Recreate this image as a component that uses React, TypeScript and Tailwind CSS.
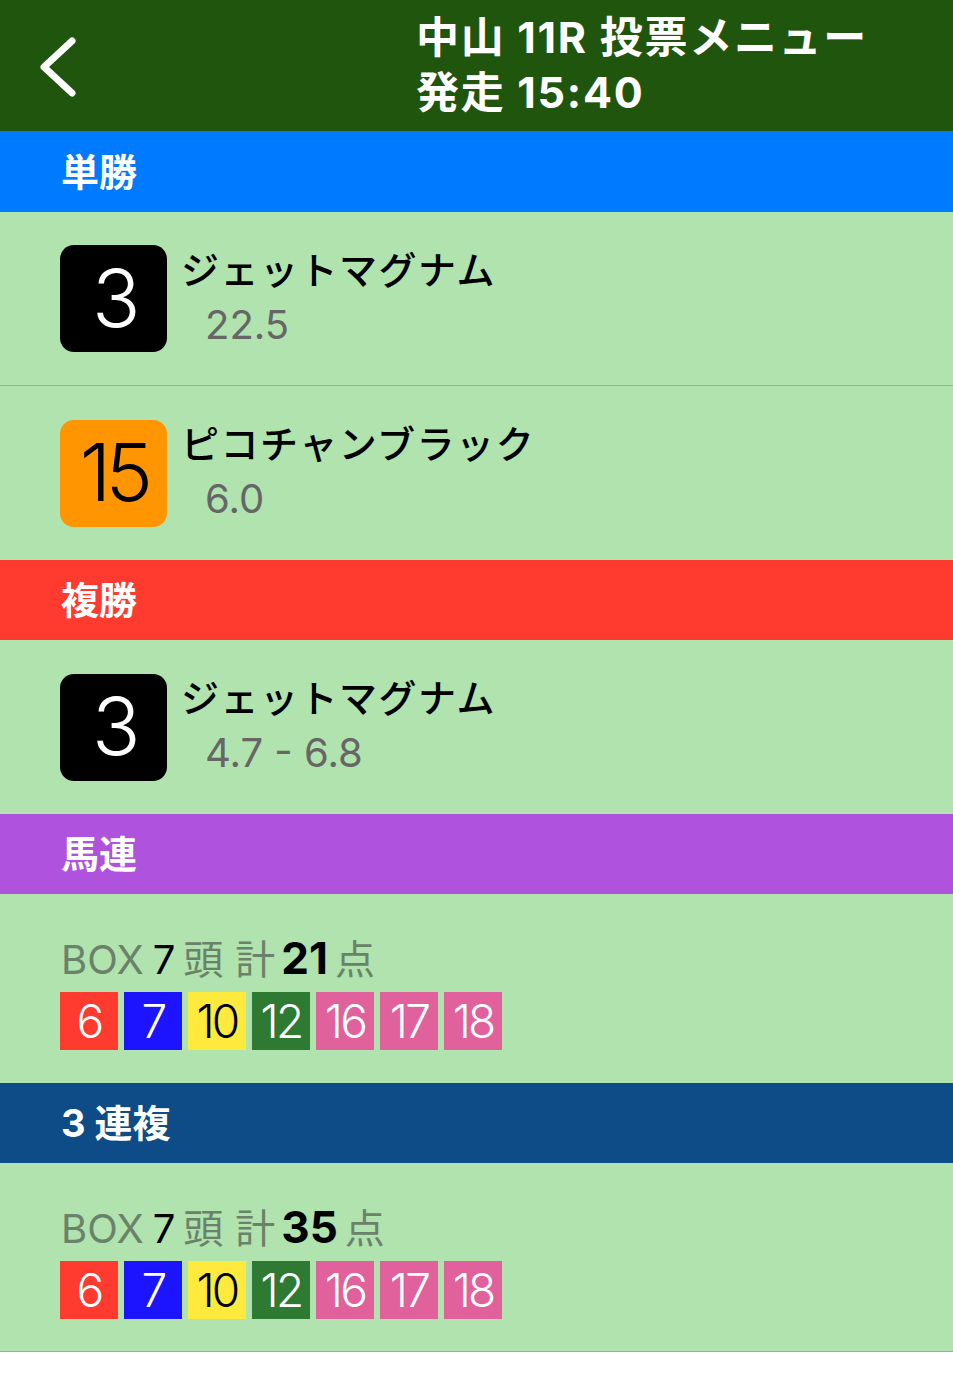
import React from 'react';

const FONT = "font-['Inter','Noto_Sans_CJK_JP',sans-serif]";

type Pick = { num: string; name: string; odds: string; badge: string };

const boxColors: Record<string, string> = {
  '6': 'bg-[#ff3b30] text-white',
  '7': 'bg-[#1c14ff] text-white',
  '10': 'bg-[#fdea3c] text-black',
  '12': 'bg-[#2e7a32] text-white',
  '16': 'bg-[#e0619c] text-white',
  '17': 'bg-[#e0619c] text-white',
  '18': 'bg-[#e0619c] text-white',
};

const SectionHeader: React.FC<{ label: string; color: string; h?: string }> = ({ label, color, h = 'h-[80px]' }) => (
  <div className={`${color} ${h} flex items-center pl-[61px]`}>
    <span className="text-[38px] font-bold text-white leading-none whitespace-pre">{label}</span>
  </div>
);

const PickRow: React.FC<{ pick: Pick; border?: boolean }> = ({ pick, border }) => (
  <div className={`h-[174px] flex items-center pl-[60px] bg-[#b0e3ae] ${border ? 'border-b border-[#8cb98a]' : ''}`}>
    <div className={`w-[107px] h-[107px] rounded-[14px] flex items-center justify-center ${pick.badge}`}>
      <span className="text-[80px] font-light leading-none tracking-[-0.07em] pb-[2px]">{pick.num}</span>
    </div>
    <div className="ml-[14px] flex flex-col pb-[2px]">
      <span className="text-[38px] font-medium text-black leading-[54px] tracking-[0.04em]">{pick.name}</span>
      <span className="text-[40px] text-[#666666] leading-[56px] pl-[24px] whitespace-pre">{pick.odds}</span>
    </div>
  </div>
);

const BoxRow: React.FC<{ total: string; h: string; border?: boolean }> = ({ total, h, border }) => (
  <div className={`${h} bg-[#b0e3ae] flex flex-col pl-[60px] pt-[39px] ${border ? 'border-b border-[#8cb98a]' : ''}`}>
    <div className="flex items-baseline text-[40px] leading-[50px] text-[#6b826a] pl-[1px]">
      <span>BOX</span>
      <span className="ml-[9px] text-black">7</span>
      <span className="ml-[8px]">頭</span>
      <span className="ml-[12px]">計</span>
      <span className="ml-[6px] text-black font-bold text-[44px]">{total}</span>
      <span className="ml-[7px]">点</span>
    </div>
    <div className="flex gap-[6px] mt-[7px]">
      {['6', '7', '10', '12', '16', '17', '18'].map((n) => (
        <div key={n} className={`w-[58px] h-[58px] flex items-center justify-center ${boxColors[n]}`}>
          <span className="text-[46px] font-light leading-none tracking-[-0.06em]">{n}</span>
        </div>
      ))}
    </div>
  </div>
);

export default function App() {
  return (
    <div className={`w-[953px] h-[1381px] bg-white ${FONT}`}>
      {/* Nav bar */}
      <div className="h-[131px] bg-[#20550e] flex items-center relative">
        <svg className="absolute left-[36px] top-[36px]" width="44" height="62" viewBox="0 0 44 62" fill="none">
          <polyline points="36,5 8,31 36,57" stroke="white" strokeWidth="7" strokeLinecap="round" strokeLinejoin="round" />
        </svg>
        <div className="pl-[416px] flex flex-col text-white font-bold text-[43px] leading-[55px] tracking-[0.04em] pb-[2px]">
          <span>中山 11R 投票メニュー</span>
          <span>発走 15:40</span>
        </div>
      </div>

      <SectionHeader label="単勝" color="bg-[#007aff]" h="h-[81px]" />
      <PickRow border pick={{ num: '3', name: 'ジェットマグナム', odds: '22.5', badge: 'bg-black text-white' }} />
      <PickRow pick={{ num: '15', name: 'ピコチャンブラック', odds: '6.0', badge: 'bg-[#ff9500] text-black' }} />

      <SectionHeader label="複勝" color="bg-[#ff3b30]" />
      <PickRow pick={{ num: '3', name: 'ジェットマグナム', odds: '4.7 - 6.8', badge: 'bg-black text-white' }} />

      <SectionHeader label="馬連" color="bg-[#af52de]" />
      <BoxRow total="21" h="h-[189px]" />

      <SectionHeader label="3 連複" color="bg-[#0d4c87]" />
      <BoxRow total="35" h="h-[189px]" border />
    </div>
  );
}
